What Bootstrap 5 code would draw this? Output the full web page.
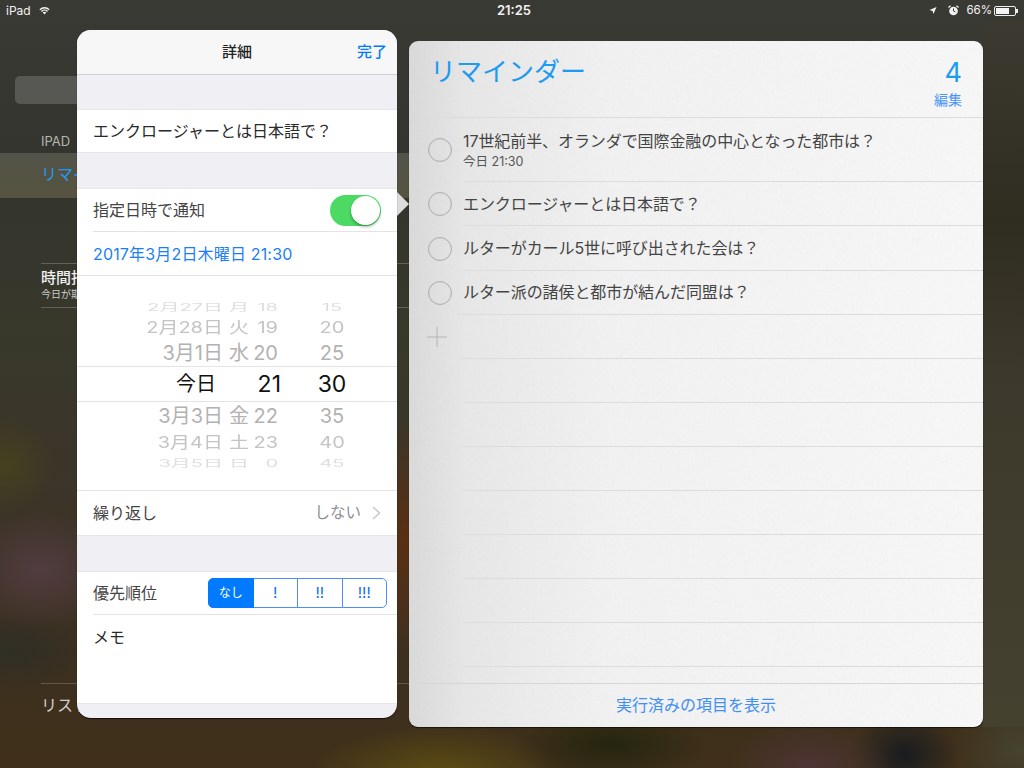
<!DOCTYPE html>
<html lang="ja">
<head>
<meta charset="utf-8">
<title>リマインダー</title>
<link href="https://cdn.jsdelivr.net/npm/bootstrap@5.3.0/dist/css/bootstrap.min.css" rel="stylesheet">
<style>
html,body{margin:0;background:#2c2b24;}
body{font-family:Inter,"Noto Sans CJK JP",sans-serif;font-size:16px;color:#333;}
.stage{position:relative;width:1024px;height:768px;overflow:hidden;display:flex;flex-direction:column;
 background:
 radial-gradient(ellipse 80px 60px at 40px 570px,#523c40 0%,rgba(82,60,64,0) 100%),
 radial-gradient(ellipse 50px 50px at 5px 465px,#45411f 0%,rgba(69,65,31,0) 100%),
 radial-gradient(ellipse 70px 40px at 15px 650px,#2f2e26 0%,rgba(47,46,38,0) 100%),
 radial-gradient(ellipse 80px 45px at 810px 765px,#4d3434 0%,rgba(77,52,52,0) 100%),
 radial-gradient(ellipse 55px 45px at 905px 755px,#191c20 0%,rgba(25,28,32,0) 100%),
 radial-gradient(ellipse 70px 60px at 1020px 750px,#46432f 0%,rgba(70,67,47,0) 100%),
 radial-gradient(ellipse 100px 40px at 610px 745px,#25250f 0%,rgba(37,37,15,0) 100%),
 radial-gradient(ellipse 130px 50px at 440px 775px,#5e4e12 0%,rgba(94,78,18,0) 100%),
 radial-gradient(ellipse 40px 120px at 404px 540px,#5a2f12 0%,rgba(90,47,18,0) 100%),
 linear-gradient(180deg,#3a3a34 0%,#33342e 22%,#38382a 45%,#3c3428 65%,#3c3020 85%,#40301a 100%);}
.stage::after{content:"";position:absolute;left:983px;right:0;top:20px;bottom:41px;background:linear-gradient(180deg,#3c3a30 0%,#2f2c20 28%,#3c392c 50%,#44412f 100%);z-index:0;}
.status-line{height:20px;padding:1px 6px 0;color:#f2f2f2;font-size:12px;position:relative;z-index:1;}
.status-time{position:absolute;left:4px;right:0;text-align:center;font-weight:600;font-size:13px;}
.status-side{margin-left:auto;gap:7px;padding-right:2px;font-size:11.5px;}
.batt{width:22px;height:10px;border:1px solid #eee;border-radius:2px;padding:1px;display:block;position:relative;margin-left:-5px;}
.batt i{display:block;height:100%;width:74%;background:#f4f4f4;}
.batt::after{content:"";position:absolute;right:-3px;top:2px;width:2px;height:4px;background:#eee;}
.workspace{flex:1;min-height:0;position:relative;z-index:1;}
.side-col{width:409px;flex:none;display:flex;flex-direction:column;height:707px;color:#ddd;overflow:hidden;}
.find-box{margin:56px 0 0 15px;width:200px;height:28px;border-radius:5px;background:rgba(255,255,255,.17);}
.side-head{margin:29px 0 0 41px;font-size:13px;line-height:16px;color:#b5b5b0;}
.side-on{margin-top:4px;height:45px;padding-left:41px;font-size:16px;line-height:43px;color:#1e9cf0;background:linear-gradient(180deg,rgba(125,125,110,.42),rgba(120,115,80,.5));}
.side-item{margin:65px 0 0 41px;border-top:1px solid rgba(255,255,255,.22);border-bottom:1px solid rgba(255,255,255,.22);height:45px;padding-top:4px;}
.side-item b{display:block;font-size:15px;line-height:20px;font-weight:500;color:#f0f0f0;}
.side-item span{display:block;font-size:10px;line-height:13px;color:#ccc;}
.side-foot{margin:auto 0 0 41px;border-top:1px solid rgba(255,255,255,.2);height:44px;padding-top:9px;font-size:16px;line-height:24px;color:#cfcfcf;}
.paper{width:574px;height:686px;margin-top:21px;border-radius:9px;border:0;overflow:hidden;position:relative;
 background:linear-gradient(90deg,#dadada 0,#e8e8e8 10%,#f2f2f2 35%,#f8f8f8 100%);box-shadow:0 1px 1px rgba(0,0,0,.6);}
.grain{position:absolute;left:0;top:0;width:100%;height:100%;opacity:.06;}
.paper-body{position:relative;display:flex;flex-direction:column;height:100%;}
.paper-head{height:77px;margin-left:21px;padding:0 21px 0 0;border-bottom:1px solid #dcdcdc;}
.paper-title{font-size:26px;line-height:36px;margin-top:13px;color:#1d9bf0;}
.paper-num{font-size:27px;line-height:32px;color:#1d9bf0;margin-top:16px;text-align:right;}
.paper-edit{font-size:14px;line-height:18px;color:#4b96f5;margin-top:2px;text-align:right;}
.todo{display:flex;}
.todo-mark{flex:none;width:54px;padding-left:19px;display:flex;align-items:center;}
.todo-ring{display:block;width:24px;height:24px;border-radius:50%;border:1px solid #aeaeae;box-shadow:inset 0 0 1px rgba(0,0,0,.15);}
.todo-text{flex:1;border-bottom:1px solid #dcdcdc;display:flex;flex-direction:column;justify-content:center;font-size:16px;color:#444;line-height:22px;letter-spacing:-.08px;}
.todo-text small{font-size:12.5px;line-height:16px;color:#555;margin-top:2px;letter-spacing:0;}
.todo-text.todo-last{margin-left:-5px;padding-left:5px;}
.h-first{height:64px;}
.h-norm{height:44.4px;}
.h-rule{height:44px;}
.plus-row{width:46px;flex:none;padding-left:18px;display:flex;align-items:center;}
.paper-foot{margin-top:auto;height:44px;border-top:1px solid #d6d6d6;text-align:center;line-height:42px;color:#3f8ff5;font-size:16px;position:relative;}
.rules{flex:1;min-height:0;overflow:hidden;}
.pop-arrow{position:absolute;left:397px;top:172px;width:0;height:0;border-top:12px solid transparent;border-bottom:12px solid transparent;border-left:12px solid #dcdcdc;}
.detail{position:absolute;left:77px;top:10px;width:320px;height:688px;border-radius:14px;border:0;overflow:hidden;background:#efeff4;box-shadow:0 1px 1px rgba(0,0,0,.7);}
.detail-top{height:45px;background:#f7f7f8;border-bottom:1px solid #cfcfd3;position:relative;text-align:center;line-height:44px;font-size:15px;font-weight:500;color:#222;}
.detail-top a{position:absolute;right:10px;top:0;color:#007aff;text-decoration:none;font-weight:500;}
.wrap-white{background:#fff;border-top:1px solid #e6e6ea;border-bottom:1px solid #e6e6ea;}
.gap-a{margin-top:35px;}
.first-block{margin-top:34px;}
.rowline{height:44px;margin-left:16px;padding-right:16px;display:flex;align-items:center;color:#444;}
.rowline:first-child{height:42px;}
.rowline+.rowline{border-top:1px solid #e4e4e6;}
.ink{color:#2a2a2a;}
.tgl{margin-left:auto;width:51px;height:31px;border-radius:16px;background:#4cd964;position:relative;flex:none;}
.tgl::after{content:"";position:absolute;right:1px;top:1px;width:29px;height:29px;border-radius:50%;background:#fff;box-shadow:0 2px 3px rgba(0,0,0,.3);}
.date-link{color:#1a7ff5;letter-spacing:.17px;}
.wheel{height:216px;padding-top:20px;overflow:hidden;border-top:1px solid #e4e4e6;border-bottom:1px solid #e4e4e6;}
.wheel-tail{margin-left:16px;}
.wh{display:flex;overflow:hidden;align-items:center;white-space:nowrap;font-size:20px;line-height:1;}
.wh span{display:block;flex:none;}
.w-d{width:146px;text-align:right;}
.w-w{width:20px;margin-left:6px;text-align:center;}
.w-h{width:29px;text-align:right;}
.w-m{width:46px;margin-left:31px;text-align:center;}
.wh0{height:3px;align-items:flex-end;color:#e0e0e0;}
.wh0 span{transform:scaleY(.3);}
.wh1{height:16px;color:#dedede;}
.wh1 span{transform:scaleY(.5);}
.wh2{height:24px;color:#c4c4c4;}
.wh2 span{transform:scaleY(.8);}
.wh3{height:27px;color:#b2b2b2;}
.wh4{height:36px;font-size:23px;color:#111;border-top:1px solid #e4e4e6;border-bottom:1px solid #e4e4e6;}
.wh4 .w-d{font-size:20px;padding-right:7px;}
.wh4 .w-h{position:relative;left:3px;}
.wh5{height:28px;color:#b2b2b2;}
.wh6{height:24px;color:#c4c4c4;}
.wh6 span{transform:scaleY(.8);}
.wh7{height:17px;color:#dedede;}
.wh7 span{transform:scaleY(.5);}
.wh8{height:3px;align-items:flex-start;color:#e0e0e0;}
.wh8 span{transform:scaleY(.3);}
.more-val{margin-left:auto;color:#8e8e93;font-size:15.500px;}
.chev{margin-left:11px;flex:none;}
.seg-row{padding-right:10px;}
.seg{margin-left:auto;width:179px;height:30px;}
.seg .btn{--bs-btn-padding-x:0;--bs-btn-padding-y:0;--bs-btn-font-size:15px;--bs-btn-color:#0a6cf0;--bs-btn-border-color:#4f8ff5;--bs-btn-bg:#fff;--bs-btn-active-bg:#007aff;--bs-btn-active-border-color:#007aff;--bs-btn-active-color:#fff;--bs-btn-border-radius:5px;line-height:28px;width:25%;font-weight:400;}
.seg .btn.active{font-size:12px;}
.memo-row{height:89px;margin-left:16px;padding-top:9px;line-height:26px;color:#2a2a2a;border-top:1px solid #e4e4e6;}
</style>
</head>
<body>
<div class="stage">
  <div class="status-line d-flex align-items-center">
    <span>iPad</span>
    <svg class="ms-2" width="11" height="9" viewBox="0 0 11 9" aria-hidden="true"><path d="M.4 3.2a7.2 7.2 0 0 1 10.2 0l-.9 1a5.9 5.9 0 0 0-8.400 0zM2 4.900a5 5 0 0 1 7 0l-.9 1a3.700 3.700 0 0 0-5.200 0zM3.700 6.600a2.600 2.600 0 0 1 3.600 0L5.500 8.500z" fill="#f2f2f2"/></svg>
    <span class="status-time">21:25</span>
    <div class="status-side d-flex align-items-center">
      <svg width="8" height="9" viewBox="0 0 9 9" aria-hidden="true"><path d="M8.500.5 5 8.500 4 5 .5 4z" fill="#f2f2f2"/></svg>
      <svg class="ms-1" width="11" height="11" viewBox="0 0 11 11" aria-hidden="true"><circle cx="5.500" cy="6" r="4.300" fill="#f2f2f2"/><path d="M5.500 3.500V6l1.800 1" stroke="#333" fill="none"/><path d="M.5 2.500 2.500.8M10.500 2.500 8.500.8" stroke="#f2f2f2" stroke-width="1.300"/></svg>
      <span>66%</span>
      <span class="batt"><i></i></span>
    </div>
  </div>
  <div class="workspace d-flex">
    <div class="side-col">
      <div class="find-box"></div>
      <div class="side-head">IPAD</div>
      <div class="side-on">リマインダー</div>
      <div class="side-item"><b>時間指定</b><span>今日が期限</span></div>
      <div class="side-foot">リストを追加</div>
    </div>
    <div class="card paper">
      <svg class="grain" aria-hidden="true"><filter id="grainf"><feTurbulence type="fractalNoise" baseFrequency=".35" numOctaves="3" seed="4"/><feColorMatrix type="saturate" values="0"/></filter><rect width="100%" height="100%" filter="url(#grainf)"/></svg>
      <div class="paper-body">
        <div class="paper-head d-flex justify-content-between">
          <div class="paper-title">リマインダー</div>
          <div><div class="paper-num">4</div><div class="paper-edit">編集</div></div>
        </div>
        <div class="todo h-first"><div class="todo-mark"><i class="todo-ring"></i></div><div class="todo-text"><span>17世紀前半、オランダで国際金融の中心となった都市は？</span><small>今日 21:30</small></div></div>
        <div class="todo h-norm"><div class="todo-mark"><i class="todo-ring"></i></div><div class="todo-text">エンクロージャーとは日本語で？</div></div>
        <div class="todo h-norm"><div class="todo-mark"><i class="todo-ring"></i></div><div class="todo-text">ルターがカール5世に呼び出された会は？</div></div>
        <div class="todo h-norm"><div class="todo-mark"><i class="todo-ring"></i></div><div class="todo-text todo-last">ルター派の諸侯と都市が結んだ同盟は？</div></div>
        <div class="rules">
          <div class="todo h-rule"><div class="plus-row"><svg width="20" height="20" viewBox="0 0 20 20" aria-hidden="true"><path d="M10 0v20M0 10h20" stroke="#b4b4b4" stroke-width="1"/></svg></div><div class="todo-text ms-1"></div></div>
          <div class="todo h-rule"><div class="plus-row"></div><div class="todo-text ms-2"></div></div>
          <div class="todo h-rule"><div class="plus-row"></div><div class="todo-text ms-2"></div></div>
          <div class="todo h-rule"><div class="plus-row"></div><div class="todo-text ms-2"></div></div>
          <div class="todo h-rule"><div class="plus-row"></div><div class="todo-text ms-2"></div></div>
          <div class="todo h-rule"><div class="plus-row"></div><div class="todo-text ms-2"></div></div>
          <div class="todo h-rule"><div class="plus-row"></div><div class="todo-text ms-2"></div></div>
          <div class="todo h-rule"><div class="plus-row"></div><div class="todo-text ms-2"></div></div>
        </div>
        <div class="paper-foot">実行済みの項目を表示</div>
      </div>
    </div>
    <div class="pop-arrow"></div>
    <div class="card detail">
      <div class="detail-top">詳細<a href="#">完了</a></div>
      <div class="wrap-white first-block"><div class="rowline ink">エンクロージャーとは日本語で？</div></div>
      <div class="wrap-white gap-a">
        <div class="rowline">指定日時で通知<span class="tgl"></span></div>
        <div class="rowline date-link">2017年3月2日木曜日 21:30</div>
        <div class="wheel">
          <div class="wh wh0"><span class="w-d">2月26日</span><span class="w-w">日</span><span class="w-h">17</span><span class="w-m">10</span></div>
          <div class="wh wh1"><span class="w-d">2月27日</span><span class="w-w">月</span><span class="w-h">18</span><span class="w-m">15</span></div>
          <div class="wh wh2"><span class="w-d">2月28日</span><span class="w-w">火</span><span class="w-h">19</span><span class="w-m">20</span></div>
          <div class="wh wh3"><span class="w-d">3月1日</span><span class="w-w">水</span><span class="w-h">20</span><span class="w-m">25</span></div>
          <div class="wh wh4"><span class="w-d">今日</span><span class="w-w"></span><span class="w-h">21</span><span class="w-m">30</span></div>
          <div class="wh wh5"><span class="w-d">3月3日</span><span class="w-w">金</span><span class="w-h">22</span><span class="w-m">35</span></div>
          <div class="wh wh6"><span class="w-d">3月4日</span><span class="w-w">土</span><span class="w-h">23</span><span class="w-m">40</span></div>
          <div class="wh wh7"><span class="w-d">3月5日</span><span class="w-w">日</span><span class="w-h">0</span><span class="w-m">45</span></div>
          <div class="wh wh8"><span class="w-d">3月6日</span><span class="w-w">月</span><span class="w-h">1</span><span class="w-m">50</span></div>
        </div>
        <div class="rowline wheel-tail">繰り返し<span class="more-val">しない</span>
          <svg class="chev" width="9" height="14" viewBox="0 0 9 14" aria-hidden="true"><path d="M1 1l6.500 6L1 13" fill="none" stroke="#c7c7cc" stroke-width="1.500"/></svg>
        </div>
      </div>
      <div class="wrap-white gap-a">
        <div class="rowline seg-row">優先順位
          <div class="btn-group seg" role="group">
            <button type="button" class="btn btn-outline-primary active">なし</button>
            <button type="button" class="btn btn-outline-primary">!</button>
            <button type="button" class="btn btn-outline-primary">!!</button>
            <button type="button" class="btn btn-outline-primary">!!!</button>
          </div>
        </div>
        <div class="memo-row">メモ</div>
      </div>
    </div>
  </div>
</div>
<script src="https://cdn.jsdelivr.net/npm/bootstrap@5.3.0/dist/js/bootstrap.bundle.min.js"></script>
</body>
</html>
